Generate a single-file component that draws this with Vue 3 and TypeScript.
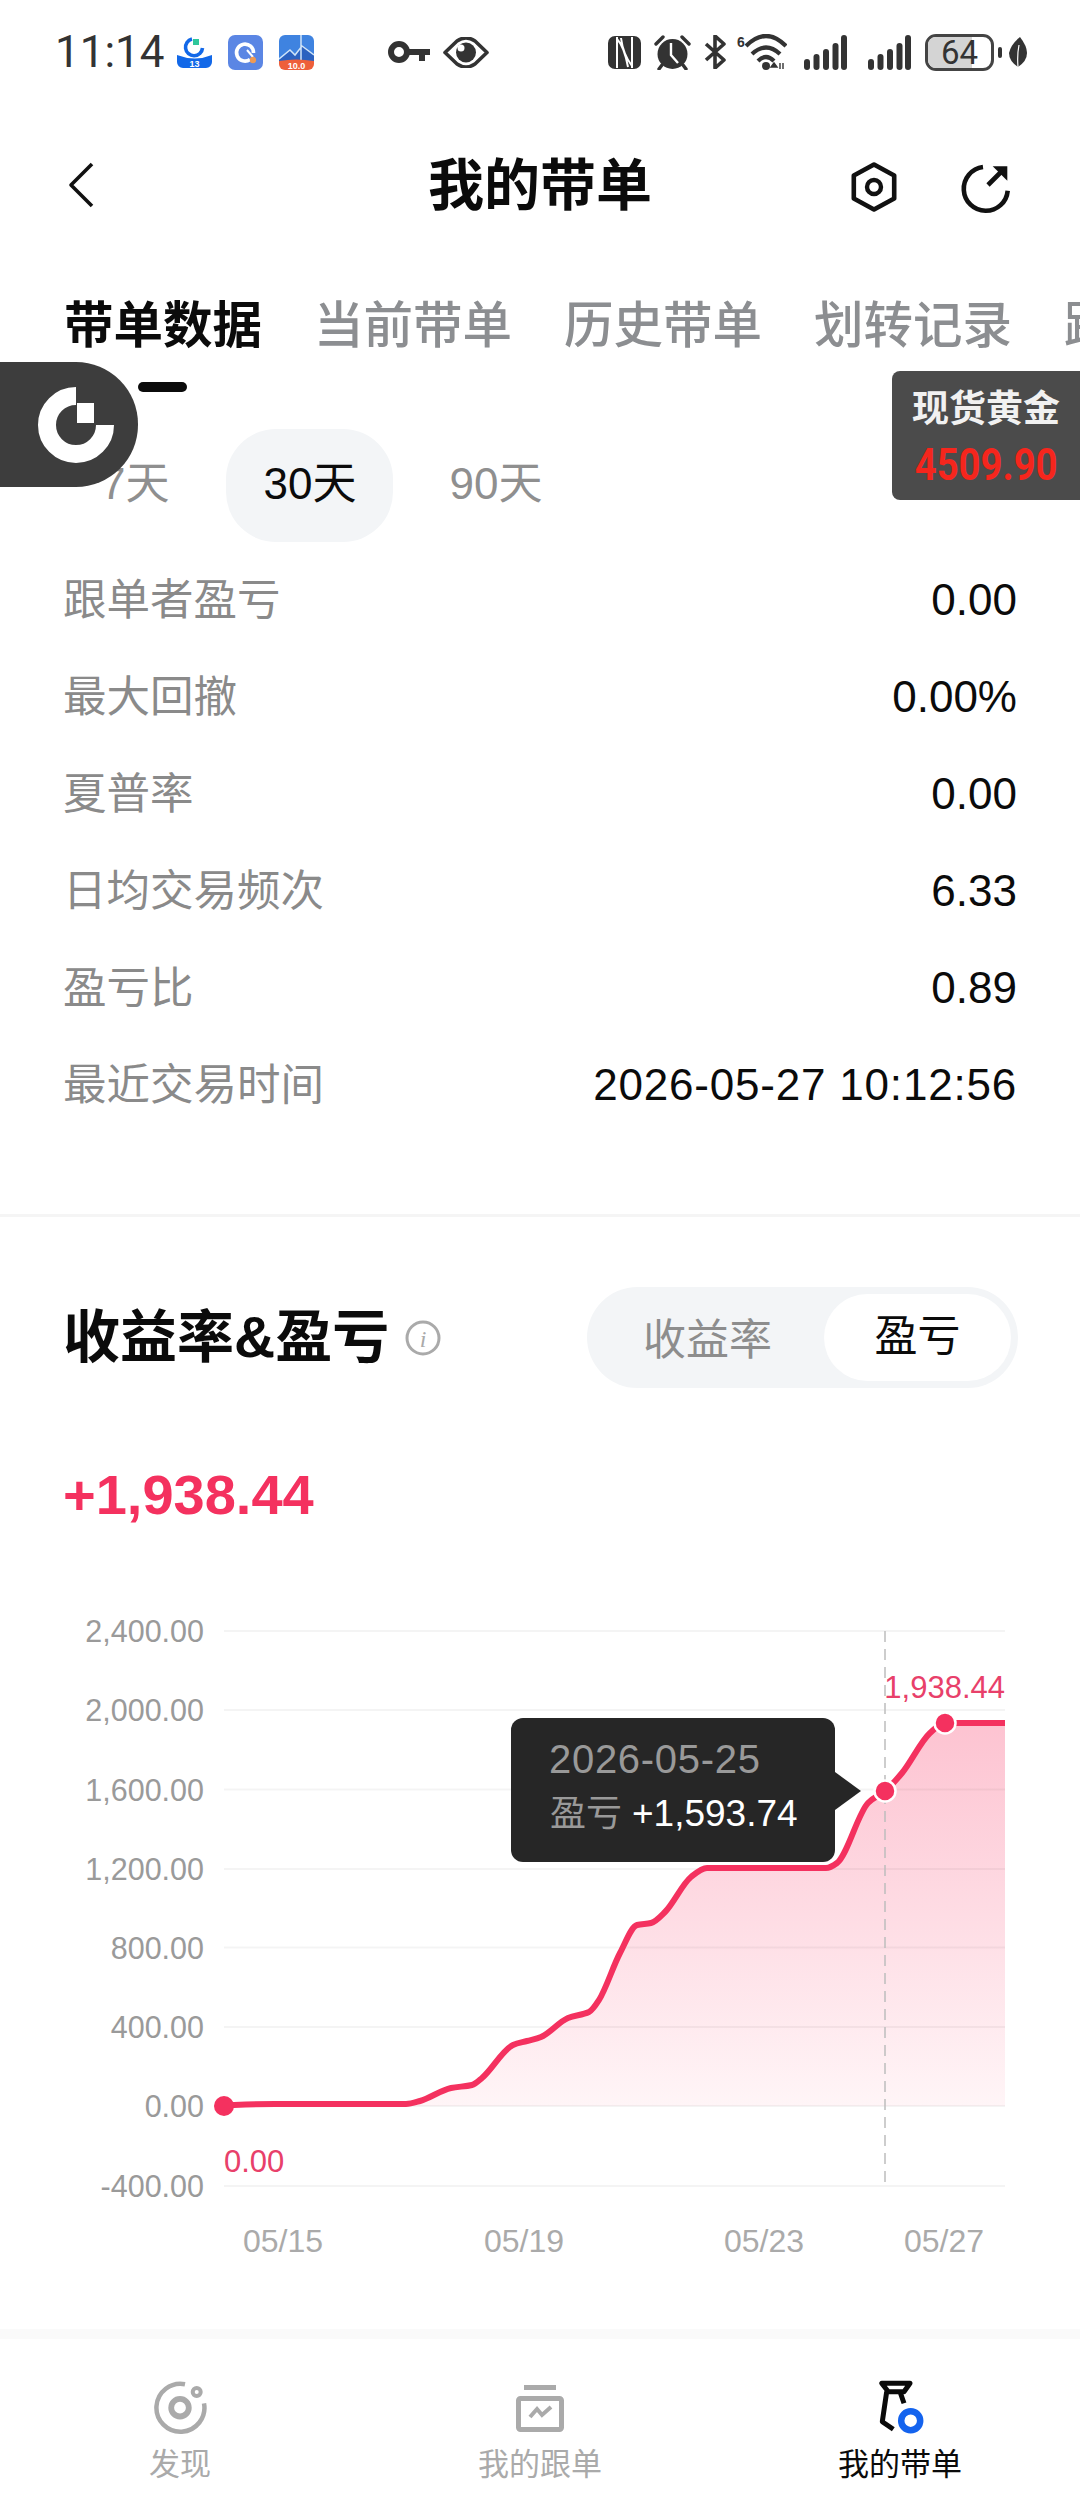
<script setup lang="ts">
const tabs = ['带单数据', '当前带单', '历史带单', '划转记录', '跟随者']
const periods = ['7天', '30天', '90天']
const rows: [string, string][] = [
  ['跟单者盈亏', '0.00'],
  ['最大回撤', '0.00%'],
  ['夏普率', '0.00'],
  ['日均交易频次', '6.33'],
  ['盈亏比', '0.89'],
  ['最近交易时间', '2026-05-27 10:12:56'],
]
const gridY: [string, number][] = [
  ['2,400.00', 1631],
  ['2,000.00', 1710],
  ['1,600.00', 1789.5],
  ['1,200.00', 1869],
  ['800.00', 1947.5],
  ['400.00', 2027],
  ['0.00', 2106],
  ['-400.00', 2186],
]
const xLabels: [string, number][] = [
  ['05/15', 283],
  ['05/19', 524],
  ['05/23', 764],
  ['05/27', 944],
]
const data: [number, number][] = [
  [224, 2106], [234, 2105], [275, 2104], [406, 2104], [420, 2101], [451, 2088],
  [472, 2085], [482, 2078], [513, 2045], [527, 2041], [541, 2037], [568, 2018],
  [589, 2012], [599, 2000], [620, 1953], [637, 1925], [651, 1923], [665, 1912],
  [691, 1877], [707, 1868], [826, 1868], [837, 1863], [868, 1803], [885, 1791],
  [902, 1773], [930, 1733], [945, 1723], [1005, 1723],
]

function monotone(p: [number, number][]): string {
  const n = p.length
  const s: number[] = []
  for (let i = 0; i < n - 1; i++) s.push((p[i + 1][1] - p[i][1]) / (p[i + 1][0] - p[i][0]))
  const t: number[] = [s[0]]
  for (let i = 1; i < n - 1; i++) {
    t.push(s[i - 1] * s[i] <= 0 ? 0 : (2 * s[i - 1] * s[i]) / (s[i - 1] + s[i]))
  }
  t.push(s[n - 2])
  let d = `M${p[0][0]} ${p[0][1]}`
  for (let i = 0; i < n - 1; i++) {
    const h = (p[i + 1][0] - p[i][0]) / 3
    d += `C${p[i][0] + h} ${p[i][1] + t[i] * h} ${p[i + 1][0] - h} ${p[i + 1][1] - t[i + 1] * h} ${p[i + 1][0]} ${p[i + 1][1]}`
  }
  return d
}
const linePath = monotone(data)
const areaPath = `${linePath}L1005 2106L224 2106Z`
const bars: [number, number][] = [[3, 11], [12.5, 16], [22, 21], [31.5, 27], [40, 35]]
</script>

<template>
  <div class="page">
    <div class="statusbar">
      <div class="sb-left">
        <span class="time">11:14</span>
        <svg class="sb-app1" width="35" height="32" viewBox="0 0 35 32">
          <path d="M0 19Q18 26 35 19V26a6 6 0 0 1-6 6H6a6 6 0 0 1-6-6Z" fill="#1268e8" />
          <path d="M15 3a8.5 8.5 0 1 0 10.5 9" fill="none" stroke="#1268e8" stroke-width="3.6" />
          <rect x="16" y="3" width="6" height="6" fill="#2fc79a" />
          <text x="17.5" y="31" class="tiny" text-anchor="middle">13</text>
        </svg>
        <svg class="sb-app" width="35" height="35" viewBox="0 0 35 35">
          <rect width="35" height="35" rx="7" fill="#5b86e4" />
          <path d="M22 24.5A8.5 8.5 0 1 1 25.5 18" fill="none" stroke="#fff" stroke-width="3.6" />
          <path d="M19 15L25 22" stroke="#fff" stroke-width="2" />
          <circle cx="25" cy="25" r="3.2" fill="#ee9a55" />
        </svg>
        <svg class="sb-app" width="35" height="35" viewBox="0 0 35 35">
          <path d="M0 6a6 6 0 0 1 6-6h23a6 6 0 0 1 6 6v20H0Z" fill="#3f83e0" />
          <path d="M0 25L11 15L16 20L23 10L35 19V26H0Z" fill="#2c62c0" />
          <path d="M0 24L11 15L16 20L23 11L35 20M22 0V26" fill="none" stroke="#cfe4f8" stroke-width="1.5" />
          <path d="M0 26Q17 23 35 26V29a6 6 0 0 1-6 6H6a6 6 0 0 1-6-6Z" fill="#ee5f3a" />
          <text x="17.5" y="33.5" class="tiny" text-anchor="middle">10.0</text>
        </svg>
      </div>
      <div class="sb-mid">
        <svg width="42" height="22" viewBox="0 0 42 22">
          <circle cx="11" cy="11" r="8" fill="none" stroke="#333" stroke-width="6" />
          <path d="M19 8H42V14H37V20H31V14H19Z" fill="#333" />
        </svg>
        <svg width="46" height="31" viewBox="0 0 46 31">
          <path d="M2 15.5L14 4Q23 -2 32 4L44 15.5L32 27Q23 33 14 27Z" fill="none" stroke="#333" stroke-width="3.6" stroke-linejoin="round" />
          <circle cx="23" cy="15.5" r="10" fill="#333" />
          <circle cx="18" cy="11" r="3.5" fill="#fff" />
        </svg>
      </div>
      <div class="sb-right">
        <svg width="33" height="33" viewBox="0 0 33 33">
          <rect width="33" height="33" rx="7" fill="#333" />
          <path d="M9 1V32M24 1V32" stroke="#fff" stroke-width="2" />
          <path d="M9 3Q16 10 20 31M13 2Q15 18 24 30" fill="none" stroke="#fff" stroke-width="2" />
        </svg>
        <svg width="37" height="35" viewBox="0 0 37 35">
          <path d="M2 9L9 2M35 9L28 2M8 30L5 34M29 30L32 34" stroke="#333" stroke-width="3.4" stroke-linecap="round" />
          <circle cx="18.5" cy="19" r="15" fill="#333" />
          <path d="M17 8V20L24 28" fill="none" stroke="#fff" stroke-width="2.4" />
        </svg>
        <svg width="22" height="34" viewBox="0 0 22 34">
          <path d="M2 9L20 25L11 33V1L20 9L2 25" fill="none" stroke="#333" stroke-width="3.6" stroke-linejoin="round" />
        </svg>
        <svg class="sb-wifi" width="50" height="36" viewBox="0 0 50 36">
          <text x="0" y="13" class="sb-six">6</text>
          <path d="M9 12Q29 -8 49 12M15 20Q29 7 43 20M21 27Q29 19 37 27" fill="none" stroke="#333" stroke-width="4.2" />
          <circle cx="29" cy="32" r="4" fill="#333" />
          <path d="M37 29L40 33H34ZM43 29V35M46 29V35" fill="#333" stroke="#333" stroke-width="1.4" />
        </svg>
        <svg class="sb-signal" width="44" height="35" viewBox="0 0 44 35">
          <rect v-for="b in bars" :key="b[0]" :x="b[0]-3" :y="35-b[1]" width="6" :height="b[1]" rx="3" fill="#333" />
        </svg>
        <svg class="sb-signal2" width="44" height="35" viewBox="0 0 44 35">
          <rect v-for="b in bars" :key="b[0]" :x="b[0]-3" :y="35-b[1]" width="6" :height="b[1]" rx="3" fill="#333" />
        </svg>
        <div class="battery">
          <div class="battery-shell">
            <div class="battery-fill"></div>
            <span class="battery-num">64</span>
          </div>
          <div class="battery-tip"></div>
        </div>
        <svg class="sb-leaf" width="18" height="30" viewBox="0 0 18 30">
          <path d="M11 0Q18 9 18 16Q18 24 9 30Q0 24 0 16Q2 7 11 0Z" fill="#333" />
          <path d="M10 8Q8 18 9 30" fill="none" stroke="#fff" stroke-width="1.2" />
        </svg>
      </div>
    </div>

    <header class="header">
      <svg class="back" width="26" height="46" viewBox="0 0 26 46">
        <path d="M24 2L3 23L24 44" fill="none" stroke="#111" stroke-width="3.6" stroke-linejoin="round" />
      </svg>
      <h1 class="title">我的带单</h1>
      <svg class="hex" width="46" height="50" viewBox="0 0 46 50">
        <path d="M23 2.6L43.2 13.6V36.4L23 47.4L2.8 36.4V13.6Z" fill="none" stroke="#111" stroke-width="4.6" stroke-linejoin="round" />
        <circle cx="23" cy="25" r="7" fill="none" stroke="#111" stroke-width="4.4" />
      </svg>
      <svg class="share" width="52" height="52" viewBox="0 0 52 52">
        <path d="M23 5A22 22 0 1 0 47.7 28.7" fill="none" stroke="#111" stroke-width="4.6" />
        <path d="M28 23L42 9" fill="none" stroke="#111" stroke-width="4.6" />
        <path d="M32.7 4.3H47.3V18.7Z" fill="#111" />
      </svg>
    </header>

    <nav class="tabs">
      <span v-for="(t, i) in tabs" :key="t" class="tab" :class="{ active: i === 0 }">{{ t }}</span>
      <i class="tab-ind"></i>
    </nav>

    <div class="periods">
      <span v-for="(p, i) in periods" :key="p" class="period" :class="{ on: i === 1 }">{{ p }}</span>
    </div>

    <section class="rows">
      <div v-for="r in rows" :key="r[0]" class="row">
        <span class="row-label">{{ r[0] }}</span>
        <span class="row-value" :class="{ long: r[1].length > 10 }">{{ r[1] }}</span>
      </div>
    </section>

    <div class="divider"></div>

    <section class="profit">
      <div class="profit-head">
        <div class="profit-title">
          <h2>收益率&amp;盈亏</h2>
          <svg width="36" height="36" viewBox="0 0 36 36">
            <circle cx="18" cy="18" r="16" fill="none" stroke="#aaa" stroke-width="3" />
            <text x="18" y="27" class="info-i" text-anchor="middle">i</text>
          </svg>
        </div>
        <div class="toggle">
          <span class="toggle-off">收益率</span>
          <span class="toggle-on">盈亏</span>
        </div>
      </div>
      <div class="total">+1,938.44</div>

      <svg class="chart" width="1080" height="680" viewBox="0 1600 1080 680">
        <defs>
          <linearGradient id="areaFill" x1="0" y1="1723" x2="0" y2="2106" gradientUnits="userSpaceOnUse">
            <stop offset="0" stop-color="#fdc3d1" />
            <stop offset="1" stop-color="#fff5f7" />
          </linearGradient>
        </defs>
        <path :d="areaPath" fill="url(#areaFill)" />
        <g v-for="g in gridY" :key="g[0]">
          <line x1="224" :y1="g[1]" x2="1005" :y2="g[1]" class="grid" />
          <text x="204" :y="g[1] + 11" class="axis" text-anchor="end">{{ g[0] }}</text>
        </g>
        <text v-for="l in xLabels" :key="l[0]" :x="l[1]" y="2252" class="axis x" text-anchor="middle">{{ l[0] }}</text>
        <line x1="885" y1="1631" x2="885" y2="2186" class="cross" />
        <path :d="linePath" fill="none" stroke="#f4315f" stroke-width="6" />
        <circle cx="224" cy="2106" r="10" fill="#f4315f" />
        <circle cx="885" cy="1791" r="10.5" fill="#f4315f" stroke="#fff" stroke-width="2.5" />
        <circle cx="945" cy="1723" r="10.5" fill="#f4315f" stroke="#fff" stroke-width="2.5" />
        <text x="1005" y="1698" class="mark" text-anchor="end">1,938.44</text>
        <text x="224" y="2172" class="mark">0.00</text>
        <path d="M835 1772L861 1791L835 1810Z" fill="#262626" />
        <rect x="511" y="1718" width="324" height="144" rx="12" fill="#262626" />
        <text x="549" y="1773" class="tip-date">2026-05-25</text>
        <text x="550" y="1826" class="tip-label">盈亏</text>
        <text x="632" y="1826" class="tip-value">+1,593.74</text>
      </svg>
    </section>

    <footer class="bottom">
      <div class="bnav">
        <svg width="56" height="56" viewBox="0 0 56 56">
          <path d="M33 4.2A24 24 0 1 0 52 23.3" fill="none" stroke="#aaa" stroke-width="4.5" />
          <circle cx="28" cy="27.7" r="8.8" fill="none" stroke="#aaa" stroke-width="5.8" />
          <circle cx="44.7" cy="12" r="4" fill="none" stroke="#aaa" stroke-width="4" />
        </svg>
        <span>发现</span>
      </div>
      <div class="bnav">
        <svg width="56" height="56" viewBox="0 0 56 56">
          <rect x="12" y="5" width="32" height="5" fill="#aaa" />
          <rect x="6.5" y="18.5" width="43" height="31" rx="2" fill="none" stroke="#aaa" stroke-width="5" />
          <path d="M18 37L25 29L30 35L39 27" fill="none" stroke="#aaa" stroke-width="4" />
        </svg>
        <span>我的跟单</span>
      </div>
      <div class="bnav active">
        <svg width="56" height="56" viewBox="0 0 56 56">
          <path d="M9.7 3.3H38L32 11.7H16.3ZM14.7 11.7L10.3 41.7L21.3 49.3M28 11.7L32 23.3" fill="none" stroke="#0a0a0a" stroke-width="5" stroke-linejoin="round" />
          <circle cx="38.7" cy="40.7" r="9.5" fill="none" stroke="#1463ee" stroke-width="6.5" />
        </svg>
        <span>我的带单</span>
      </div>
    </footer>

    <div class="float-left">
      <svg width="80" height="80" viewBox="0 0 80 80">
        <path d="M40 11A29 29 0 1 0 69 40" fill="none" stroke="#fff" stroke-width="18" />
        <rect x="41" y="18" width="17" height="20" fill="#fff" />
      </svg>
    </div>
    <div class="float-right">
      <span class="gold-name">现货黄金</span>
      <span class="gold-price">4509.90</span>
    </div>
  </div>
</template>

<style>
html, body { margin: 0; background: #fff; }
</style>

<style scoped>
.page {
  position: relative;
  width: 1080px;
  height: 2504px;
  overflow: hidden;
  background: #fff;
  display: flex;
  flex-direction: column;
  font-family: "Liberation Sans", "Noto Sans CJK SC", sans-serif;
  color: #0b0b0b;
}
.statusbar {
  height: 104px;
  flex: none;
  display: flex;
  align-items: center;
  padding-left: 55px;
  color: #333;
}
.sb-left { display: flex; align-items: center; gap: 16px; width: 333px; }
.sb-app1 { margin-left: -4px; }
.time { font-family: Roboto, sans-serif; font-size: 44px; width: 110px; line-height: 1; }
.tiny { font: 700 9px "Liberation Sans", sans-serif; fill: #fff; }
.sb-mid { display: flex; align-items: center; gap: 13px; width: 220px; }
.sb-right { display: flex; align-items: center; gap: 13px; }
.sb-six { font: 700 14px "Liberation Sans", sans-serif; fill: #333; }
.sb-signal { margin-left: 4px; }
.sb-signal2 { margin-left: 7px; }
.sb-wifi { margin-left: -2px; }
.battery { display: flex; align-items: center; gap: 4px; margin-right: -6px; }
.battery-shell {
  position: relative;
  width: 69px;
  height: 37px;
  box-sizing: border-box;
  border: 3px solid #444;
  border-radius: 11px;
  display: flex;
  align-items: center;
  justify-content: center;
}
.battery-fill { position: absolute; left: 0; top: 0; bottom: 0; width: 70%; background: #d4d4d4; border-radius: 8px 0 0 8px; }
.battery-num { position: relative; font-family: Roboto, sans-serif; font-size: 33px; line-height: 31px; color: #333; }
.battery-tip { width: 4px; height: 11px; background: #333; border-radius: 2px; }
.header {
  height: 160px;
  flex: none;
  position: relative;
  display: flex;
  align-items: center;
  justify-content: center;
}
.title { margin: 3px 0 0; font-size: 56px; font-weight: 700; line-height: 1; }
.back { position: absolute; left: 68px; top: 58px; }
.hex { position: absolute; left: 851px; top: 58px; }
.share { position: absolute; left: 960px; top: 58px; }
.tabs {
  position: relative;
  height: 128px;
  flex: none;
  display: flex;
  gap: 52px;
  padding: 37px 0 0 64px;
  box-sizing: border-box;
  overflow: hidden;
  white-space: nowrap;
}
.tab { font-size: 49.5px; line-height: 50px; font-weight: 500; color: #8c8e91; flex: none; }
.tab.active { color: #0b0b0b; font-weight: 700; }
.tab-ind { position: absolute; left: 138px; bottom: 0; width: 49px; height: 10px; border-radius: 5px; background: #0b0b0b; }
.periods {
  display: flex;
  align-items: center;
  height: 113px;
  margin-top: 37px;
  flex: none;
  padding-left: 101px;
}
.period { font-size: 44px; color: #8f8f8f; line-height: 110px; padding-bottom: 3px; }
.period.on {
  color: #0b0b0b;
  background: #f3f5f7;
  border-radius: 50px;
  width: 167px;
  text-align: center;
  margin: 0 56px 0 57px;
}
.rows {
  margin-top: 9px;
  padding: 0 63px;
  flex: none;
  height: 663px;
}
.row { display: flex; justify-content: space-between; align-items: center; height: 97px; }
.row-label { font-size: 43.5px; color: #8a8a8a; margin-bottom: 7px; }
.row-value { font-size: 44px; color: #0b0b0b; }
.row-value.long { letter-spacing: 0.8px; }
.divider { height: 3px; background: #f5f5f5; flex: none; }
.profit { flex: none; }
.profit-head {
  display: flex;
  justify-content: space-between;
  align-items: center;
  height: 101px;
  margin-top: 70px;
  padding: 0 62px 0 63px;
}
.profit-title { display: flex; align-items: center; gap: 16px; }
.profit-title h2 { margin: 0; font-size: 57px; font-weight: 700; line-height: 1; color: #0b0b0b; }
.toggle {
  width: 431px;
  height: 101px;
  box-sizing: border-box;
  padding: 7px;
  border-radius: 51px;
  background: #f3f5f7;
  display: flex;
  align-items: center;
  justify-content: space-between;
}
.toggle-off { font-size: 43px; color: #8d8d8d; padding-left: 49px; margin-bottom: 3px; }
.toggle-on {
  width: 187px;
  height: 87px;
  border-radius: 44px;
  background: #fff;
  text-align: center;
  font-size: 43px;
  line-height: 84px;
  color: #0b0b0b;
}
.total {
  margin-top: 77px;
  padding-left: 63px;
  font-size: 56px;
  font-weight: 700;
  line-height: 60px;
  height: 60px;
  color: #f4315f;
}
.chart { display: block; margin-top: 75px; }
.grid { stroke: rgba(0, 0, 0, 0.045); stroke-width: 2; }
.axis { font-size: 30.5px; fill: #9a9a9a; font-family: "Liberation Sans", sans-serif; }
.axis.x { fill: #aaa; font-size: 32px; }
.cross { stroke: #bdbdbd; stroke-width: 1.5; stroke-dasharray: 11 7; }
.mark { font-size: 31px; fill: #e8406a; font-family: "Liberation Sans", sans-serif; }
.tip-date { font-size: 40px; letter-spacing: 0.7px; fill: #999; font-family: "Liberation Sans", sans-serif; }
.tip-label { font-size: 36px; fill: #999; font-family: "Noto Sans CJK SC", sans-serif; }
.tip-value { font-size: 37px; fill: #fff; font-family: "Liberation Sans", sans-serif; }
.info-i { font: italic 24px "Liberation Serif", serif; fill: #aaa; }
.bottom {
  position: absolute;
  left: 0;
  right: 0;
  bottom: 0;
  height: 165px;
  display: grid;
  grid-template-columns: repeat(3, 360px);
  box-shadow: 0 -10px 0 #fafafa;
  background: #fff;
}
.bnav {
  display: flex;
  flex-direction: column;
  align-items: center;
  padding-top: 41px;
  box-sizing: border-box;
  font-size: 31px;
  color: #aaa;
  gap: 11px;
  line-height: 36px;
}
.bnav.active { color: #0b0b0b; }
.float-left {
  position: absolute;
  left: 0;
  top: 362px;
  width: 138px;
  height: 125px;
  background: #3d3d3d;
  border-radius: 0 62px 62px 0;
  display: flex;
  align-items: center;
  padding-left: 36px;
  box-sizing: border-box;
}
.float-right {
  position: absolute;
  left: 892px;
  top: 371px;
  width: 188px;
  height: 129px;
  background: #4b4b4b;
  border-radius: 8px 0 0 8px;
  display: flex;
  flex-direction: column;
  align-items: center;
}
.gold-name { font-size: 37px; font-weight: 700; color: #f1f1f1; line-height: 44px; margin-top: 17px; }
.gold-price {
  font-family: Roboto, sans-serif;
  font-size: 44px;
  font-weight: 700;
  color: #f5261d;
  line-height: 48px;
  margin-top: 9px;
  transform: scaleX(0.87);
}
</style>
